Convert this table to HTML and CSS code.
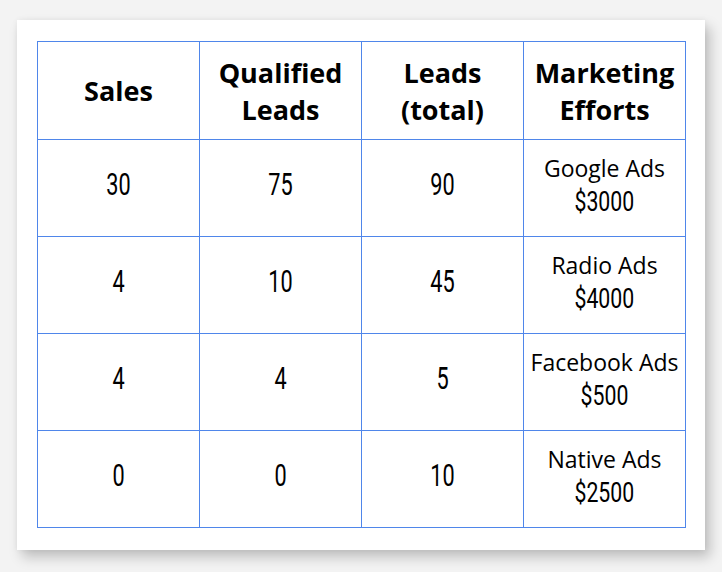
FILE: index.html
```html
<!DOCTYPE html>
<html>
<head>
<meta charset="utf-8">
<link rel="stylesheet" href="styles.css">
</head>
<body>
<div class="card">
  <table class="grid">
    <colgroup>
      <col class="col"><col class="col"><col class="col"><col class="col">
    </colgroup>
    <thead>
      <tr>
        <th>Sales</th>
        <th>Qualified<br>Leads</th>
        <th>Leads<br>(total)</th>
        <th>Marketing<br>Efforts</th>
      </tr>
    </thead>
    <tbody>
      <tr>
        <td><span class="num">30</span></td><td><span class="num">75</span></td><td><span class="num">90</span></td>
        <td class="effort"><span class="name">Google Ads</span><span class="cost">$3000</span></td>
      </tr>
      <tr>
        <td><span class="num">4</span></td><td><span class="num">10</span></td><td><span class="num">45</span></td>
        <td class="effort"><span class="name">Radio Ads</span><span class="cost">$4000</span></td>
      </tr>
      <tr>
        <td><span class="num">4</span></td><td><span class="num">4</span></td><td><span class="num">5</span></td>
        <td class="effort"><span class="name">Facebook Ads</span><span class="cost">$500</span></td>
      </tr>
      <tr>
        <td><span class="num">0</span></td><td><span class="num">0</span></td><td><span class="num">10</span></td>
        <td class="effort"><span class="name">Native Ads</span><span class="cost">$2500</span></td>
      </tr>
    </tbody>
  </table>
</div>
</body>
</html>
```
FILE: styles.css
```css
html, body {
  margin: 0;
  padding: 0;
}
body {
  background: #f3f3f3;
  width: 722px;
  height: 572px;
  padding: 20px 0 0 17px;
  box-sizing: border-box;
}
.card {
  width: 688px;
  height: 530px;
  background: #ffffff;
  box-sizing: border-box;
  padding: 21px 20px 0 20px;
  box-shadow: 5px 7px 12px rgba(0, 0, 0, 0.22), 0 0 6px rgba(0, 0, 0, 0.05);
}
.grid {
  border-collapse: collapse;
  table-layout: fixed;
  width: 649px;
  color: #000;
}
.col {
  width: 162px;
}
.grid th, .grid td {
  border: 1px solid #4f86ea;
  text-align: center;
  vertical-align: middle;
  padding: 0;
  height: 96px;
}
.grid th {
  font-family: "Open Sans", "Noto Sans", sans-serif;
  font-weight: 700;
  font-size: 27px;
  line-height: 37px;
  height: 97px;
}
.num {
  display: inline-block;
  font-family: Roboto, sans-serif;
  font-weight: 400;
  font-size: 31px;
  line-height: 36px;
  transform: translateY(-3px) scaleX(0.7);
}
.effort {
  font-family: "Open Sans", "Noto Sans", sans-serif;
}
.effort .name {
  display: block;
  font-size: 23px;
  line-height: 33px;
}
.effort .cost {
  display: inline-block;
  font-family: Roboto, sans-serif;
  font-weight: 400;
  font-size: 28px;
  line-height: 34px;
  margin-bottom: 6px;
  transform: scaleX(0.76);
}
```
